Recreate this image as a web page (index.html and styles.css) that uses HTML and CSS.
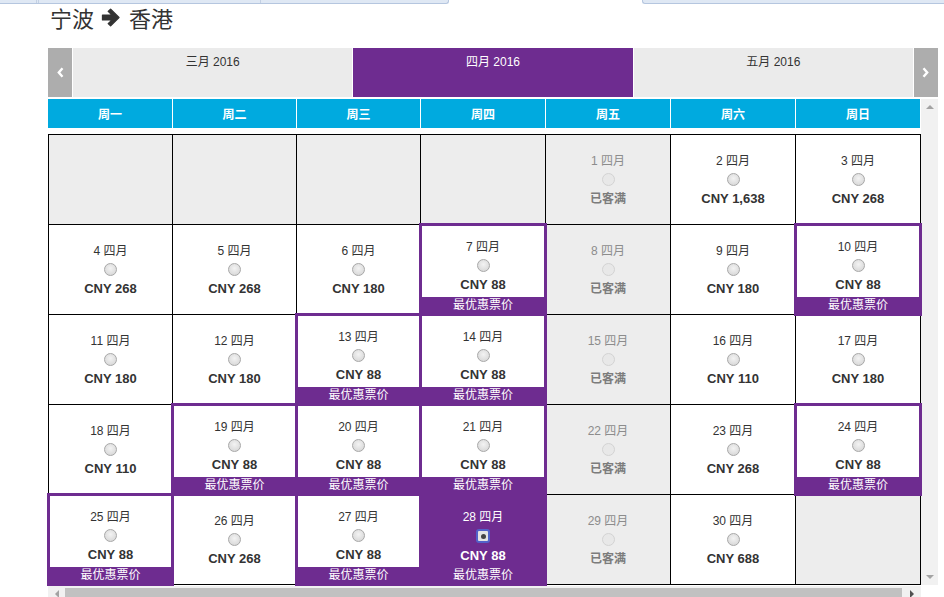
FILE: index.html
```html
<!DOCTYPE html>
<html lang="zh-CN">
<head>
<meta charset="utf-8">
<title>宁波 → 香港</title>
<link rel="stylesheet" href="styles.css">
</head>
<body>
<div class="chrome">
  <div class="chrome-tab first"><span class="sep s1"></span><span class="sep s2"></span><span class="sep s3"></span></div>
  <div class="chrome-gap"></div>
  <div class="chrome-tab second"></div>
</div>
<div class="page">
  <h1 class="route">
    <span>宁波</span>
    <svg class="route-arrow" width="20" height="19" viewBox="0 0 20 18"><path d="M1.5 6.6H11L7.2 2.9L9.6 0.6L18 9L9.6 17.4L7.2 15.1L11 11.4H1.5Z" fill="#333" stroke="#333" stroke-width="1.3" stroke-linejoin="round"/></svg>
    <span>香港</span>
  </h1>

  <div class="months">
    <div class="nav"><svg width="7" height="11" viewBox="0 0 7 11"><polyline points="5.5,1.2 1.8,5.5 5.5,9.8" fill="none" stroke="#fff" stroke-width="2.4"/></svg></div>
    <div class="month">三月 2016</div>
    <div class="month active">四月 2016</div>
    <div class="month">五月 2016</div>
    <div class="nav"><svg width="7" height="11" viewBox="0 0 7 11"><polyline points="1.5,1.2 5.2,5.5 1.5,9.8" fill="none" stroke="#fff" stroke-width="2.4"/></svg></div>
  </div>

  <div class="body">
    <div class="viewport">
      <div class="weekdays">
        <div>周一</div><div>周二</div><div>周三</div><div>周四</div><div>周五</div><div>周六</div><div>周日</div>
      </div>
      <div class="grid">
        <div class="cell empty"></div>
        <div class="cell empty"></div>
        <div class="cell empty"></div>
        <div class="cell empty"></div>
        <div class="cell full"><div class="date">1 四月</div><span class="radio"></span><div class="price">已客满</div></div>
        <div class="cell"><div class="date">2 四月</div><span class="radio"></span><div class="price">CNY 1,638</div></div>
        <div class="cell"><div class="date">3 四月</div><span class="radio"></span><div class="price">CNY 268</div></div>

        <div class="cell"><div class="date">4 四月</div><span class="radio"></span><div class="price">CNY 268</div></div>
        <div class="cell"><div class="date">5 四月</div><span class="radio"></span><div class="price">CNY 268</div></div>
        <div class="cell"><div class="date">6 四月</div><span class="radio"></span><div class="price">CNY 180</div></div>
        <div class="cell best"><div class="date">7 四月</div><span class="radio"></span><div class="price">CNY 88</div><div class="tag">最优惠票价</div></div>
        <div class="cell full"><div class="date">8 四月</div><span class="radio"></span><div class="price">已客满</div></div>
        <div class="cell"><div class="date">9 四月</div><span class="radio"></span><div class="price">CNY 180</div></div>
        <div class="cell best"><div class="date">10 四月</div><span class="radio"></span><div class="price">CNY 88</div><div class="tag">最优惠票价</div></div>

        <div class="cell"><div class="date">11 四月</div><span class="radio"></span><div class="price">CNY 180</div></div>
        <div class="cell"><div class="date">12 四月</div><span class="radio"></span><div class="price">CNY 180</div></div>
        <div class="cell best"><div class="date">13 四月</div><span class="radio"></span><div class="price">CNY 88</div><div class="tag">最优惠票价</div></div>
        <div class="cell best"><div class="date">14 四月</div><span class="radio"></span><div class="price">CNY 88</div><div class="tag">最优惠票价</div></div>
        <div class="cell full"><div class="date">15 四月</div><span class="radio"></span><div class="price">已客满</div></div>
        <div class="cell"><div class="date">16 四月</div><span class="radio"></span><div class="price">CNY 110</div></div>
        <div class="cell"><div class="date">17 四月</div><span class="radio"></span><div class="price">CNY 180</div></div>

        <div class="cell"><div class="date">18 四月</div><span class="radio"></span><div class="price">CNY 110</div></div>
        <div class="cell best"><div class="date">19 四月</div><span class="radio"></span><div class="price">CNY 88</div><div class="tag">最优惠票价</div></div>
        <div class="cell best"><div class="date">20 四月</div><span class="radio"></span><div class="price">CNY 88</div><div class="tag">最优惠票价</div></div>
        <div class="cell best"><div class="date">21 四月</div><span class="radio"></span><div class="price">CNY 88</div><div class="tag">最优惠票价</div></div>
        <div class="cell full"><div class="date">22 四月</div><span class="radio"></span><div class="price">已客满</div></div>
        <div class="cell"><div class="date">23 四月</div><span class="radio"></span><div class="price">CNY 268</div></div>
        <div class="cell best"><div class="date">24 四月</div><span class="radio"></span><div class="price">CNY 88</div><div class="tag">最优惠票价</div></div>

        <div class="cell best"><div class="date">25 四月</div><span class="radio"></span><div class="price">CNY 88</div><div class="tag">最优惠票价</div></div>
        <div class="cell"><div class="date">26 四月</div><span class="radio"></span><div class="price">CNY 268</div></div>
        <div class="cell best"><div class="date">27 四月</div><span class="radio"></span><div class="price">CNY 88</div><div class="tag">最优惠票价</div></div>
        <div class="cell best selected"><div class="date">28 四月</div><span class="radio checked"></span><div class="price">CNY 88</div><div class="tag">最优惠票价</div></div>
        <div class="cell full"><div class="date">29 四月</div><span class="radio"></span><div class="price">已客满</div></div>
        <div class="cell"><div class="date">30 四月</div><span class="radio"></span><div class="price">CNY 688</div></div>
        <div class="cell empty"></div>
      </div>
    </div>
    <div class="vscroll">
      <span class="tri up"></span>
      <span class="tri down"></span>
    </div>
  </div>

  <div class="hscroll">
    <div class="harrow"><span class="tri left"></span></div>
    <div class="thumb"></div>
    <div class="harrow"><span class="tri right"></span></div>
  </div>
</div>
</body>
</html>
```
FILE: styles.css
```css
* { box-sizing: border-box; }

html, body { height: 100%; overflow: hidden; }

body {
  margin: 0;
  background: #fff;
  color: #333;
  font-family: "Liberation Sans", "Noto Sans CJK SC", sans-serif;
}

/* browser tab strip remnants */
.chrome { display: flex; height: 4px; }
.chrome-tab {
  background: #dfe8f4;
  border-bottom: 1px solid #b5c6df;
}
.chrome-tab.first {
  width: 449px;
  border-right: 1px solid #b5c6df;
  border-bottom-right-radius: 3px;
  display: flex;
}
.sep { width: 1px; height: 3px; background: #c3d0e3; }
.s1 { margin-left: 36px; }
.s2 { margin-left: 1px; }
.s3 { margin-left: 221px; }
.chrome-gap { width: 193px; }
.chrome-tab.second {
  flex: 1;
  border-left: 1px solid #b5c6df;
  border-bottom-left-radius: 3px;
}

.page { padding-left: 48px; }

.route {
  margin: 0;
  padding-left: 2px;
  height: 26px;
  display: flex;
  align-items: center;
  gap: 7px;
  font-size: 22px;
  font-weight: normal;
  line-height: 26px;
  color: #333;
  font-family: "Noto Sans CJK SC", sans-serif;
}
.route-arrow { margin-right: 1px; }

/* month selector */
.months {
  margin-top: 18px;
  width: 890px;
  height: 49px;
  display: flex;
  gap: 1px;
}
.nav {
  width: 24px;
  background: #adadad;
  display: flex;
  align-items: center;
  justify-content: center;
}
.month {
  flex: 1;
  background: #ebebeb;
  text-align: center;
  font-size: 12px;
  line-height: 16px;
  padding-top: 6px;
  color: #333;
}
.month.active { background: #6e2c90; color: #fff; }

/* calendar body */
.body { display: flex; margin-top: 2px; }
.viewport { width: 873px; }

.weekdays {
  display: grid;
  grid-template-columns: 124px 123px 123px 124px 124px 124px 124px;
  gap: 1px;
  height: 29px;
}
.weekdays div {
  background: #00aadf;
  color: #fff;
  font-weight: bold;
  font-size: 12px;
  display: flex;
  align-items: center;
  justify-content: center;
}

.grid {
  margin-top: 6px;
  display: grid;
  grid-template-columns: 123px 123px 123px 124px 124px 124px 124px;
  grid-auto-rows: 89px;
  gap: 1px;
  background: #000;
  border: 1px solid #000;
}

.cell {
  background: #fff;
  display: flex;
  flex-direction: column;
  align-items: center;
  padding-top: 17px;
  font-size: 12px;
}
.cell.empty, .cell.full { background: #ededed; }

.date { line-height: 18px; color: #333; }
.radio {
  display: block;
  width: 13px;
  height: 13px;
  margin-top: 3px;
  border-radius: 50%;
  border: 1px solid #a8a8a8;
  background: radial-gradient(circle at 50% 40%, #f3f3f3 0%, #dcdcdc 70%, #cfcfcf 100%);
}
.price {
  margin-top: 4px;
  line-height: 18px;
  font-weight: bold;
  font-size: 13px;
  color: #333;
}

.full .date { color: #8c8c8c; }
.full .radio {
  border-color: #d3d3d3;
  background: #e8e8e8;
}
.full .price { color: #7c7c7c; font-size: 12px; }

.best {
  position: relative;
  z-index: 1;
  padding-top: 13px;
  box-shadow: inset 0 0 0 1px #6e2c90, 0 0 0 2px #6e2c90;
}
.tag {
  margin-top: auto;
  align-self: stretch;
  height: 17px;
  background: #6e2c90;
  color: #fff;
  text-align: center;
  line-height: 17px;
  font-size: 12px;
}

.selected { background: #6e2c90; }
.selected .date, .selected .price { color: #fff; }
.radio.checked {
  width: 14px;
  height: 14px;
  border-radius: 3px;
  border: 2px solid #5262c9;
  background: #e4e4e4;
  display: flex;
  align-items: center;
  justify-content: center;
}
.radio.checked::after {
  content: "";
  width: 5px;
  height: 5px;
  border-radius: 50%;
  background: #444;
}

/* fake scrollbars */
.vscroll {
  width: 17px;
  background: #f1f1f1;
  display: flex;
  flex-direction: column;
  justify-content: space-between;
  align-items: center;
  padding: 6px 0 6px;
}
.tri { width: 0; height: 0; display: block; }
.tri.up { border-left: 4px solid transparent; border-right: 4px solid transparent; border-bottom: 4px solid #a3a3a3; }
.tri.down { border-left: 4px solid transparent; border-right: 4px solid transparent; border-top: 4px solid #a3a3a3; }
.tri.left { border-top: 4px solid transparent; border-bottom: 4px solid transparent; border-right: 4px solid #a3a3a3; }
.tri.right { border-top: 4px solid transparent; border-bottom: 4px solid transparent; border-left: 4px solid #505050; }

.hscroll {
  margin-top: 1px;
  width: 873px;
  height: 11px;
  background: #f1f1f1;
  display: flex;
  align-items: flex-start;
  padding-top: 2px;
}
.harrow {
  width: 17px;
  height: 9px;
  display: flex;
  align-items: center;
  justify-content: center;
  padding-top: 3px;
}
.harrow:last-child { width: 19px; }
.thumb {
  width: 837px;
  height: 11px;
  background: #c1c1c1;
}
```
